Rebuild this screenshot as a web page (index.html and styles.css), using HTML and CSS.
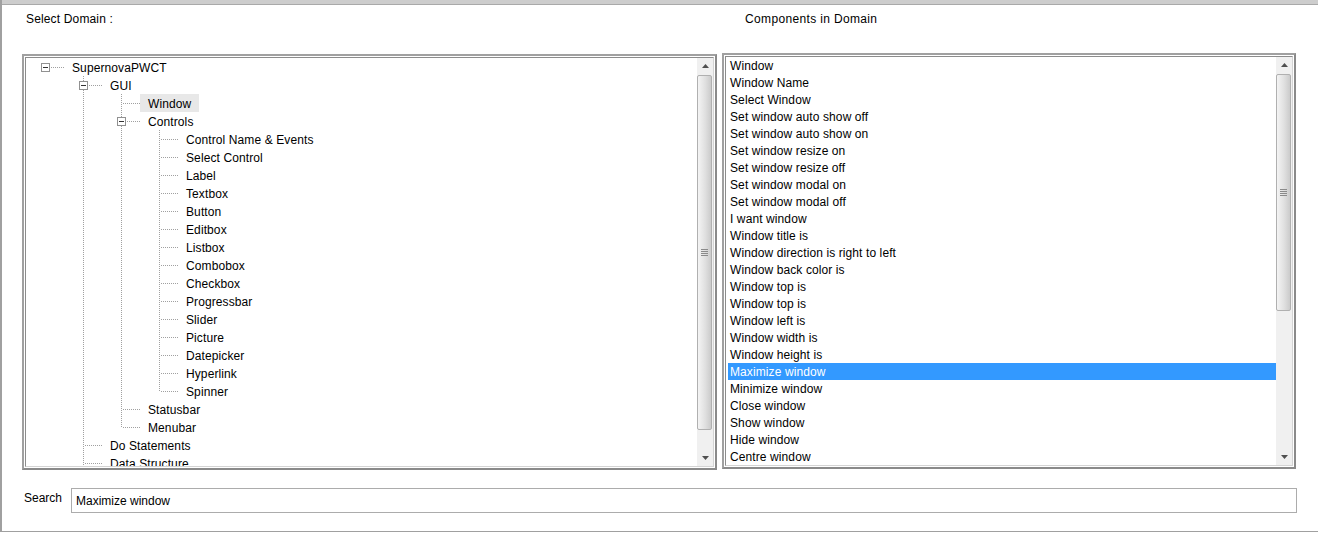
FILE: index.html
```html
<!DOCTYPE html>
<html>
<head>
<meta charset="utf-8">
<title>Select Domain</title>
<link rel="stylesheet" href="styles.css">
</head>
<body>
<div class="app">
  <div class="topbar"></div>
  <div class="header">
    <div class="h-left">Select Domain :</div>
    <div class="h-right">Components in Domain</div>
  </div>
  <div class="panels">
    <div class="panel tree-panel">
      <div class="inner">
        <div class="tree">
          <div class="trow"><span class="cell hz"><span class="box"></span></span><span class="lbl">SupernovaPWCT</span></div>
          <div class="trow"><span class="cell"></span><span class="cell tee"><span class="box"></span></span><span class="lbl">GUI</span></div>
          <div class="trow"><span class="cell"></span><span class="cell pipe"></span><span class="cell tee"></span><span class="lbl sel">Window</span></div>
          <div class="trow"><span class="cell"></span><span class="cell pipe"></span><span class="cell tee"><span class="box"></span></span><span class="lbl">Controls</span></div>
          <div class="trow"><span class="cell"></span><span class="cell pipe"></span><span class="cell pipe"></span><span class="cell tee"></span><span class="lbl">Control Name &amp; Events</span></div>
          <div class="trow"><span class="cell"></span><span class="cell pipe"></span><span class="cell pipe"></span><span class="cell tee"></span><span class="lbl">Select Control</span></div>
          <div class="trow"><span class="cell"></span><span class="cell pipe"></span><span class="cell pipe"></span><span class="cell tee"></span><span class="lbl">Label</span></div>
          <div class="trow"><span class="cell"></span><span class="cell pipe"></span><span class="cell pipe"></span><span class="cell tee"></span><span class="lbl">Textbox</span></div>
          <div class="trow"><span class="cell"></span><span class="cell pipe"></span><span class="cell pipe"></span><span class="cell tee"></span><span class="lbl">Button</span></div>
          <div class="trow"><span class="cell"></span><span class="cell pipe"></span><span class="cell pipe"></span><span class="cell tee"></span><span class="lbl">Editbox</span></div>
          <div class="trow"><span class="cell"></span><span class="cell pipe"></span><span class="cell pipe"></span><span class="cell tee"></span><span class="lbl">Listbox</span></div>
          <div class="trow"><span class="cell"></span><span class="cell pipe"></span><span class="cell pipe"></span><span class="cell tee"></span><span class="lbl">Combobox</span></div>
          <div class="trow"><span class="cell"></span><span class="cell pipe"></span><span class="cell pipe"></span><span class="cell tee"></span><span class="lbl">Checkbox</span></div>
          <div class="trow"><span class="cell"></span><span class="cell pipe"></span><span class="cell pipe"></span><span class="cell tee"></span><span class="lbl">Progressbar</span></div>
          <div class="trow"><span class="cell"></span><span class="cell pipe"></span><span class="cell pipe"></span><span class="cell tee"></span><span class="lbl">Slider</span></div>
          <div class="trow"><span class="cell"></span><span class="cell pipe"></span><span class="cell pipe"></span><span class="cell tee"></span><span class="lbl">Picture</span></div>
          <div class="trow"><span class="cell"></span><span class="cell pipe"></span><span class="cell pipe"></span><span class="cell tee"></span><span class="lbl">Datepicker</span></div>
          <div class="trow"><span class="cell"></span><span class="cell pipe"></span><span class="cell pipe"></span><span class="cell tee"></span><span class="lbl">Hyperlink</span></div>
          <div class="trow"><span class="cell"></span><span class="cell pipe"></span><span class="cell pipe"></span><span class="cell elbow"></span><span class="lbl">Spinner</span></div>
          <div class="trow"><span class="cell"></span><span class="cell pipe"></span><span class="cell tee"></span><span class="lbl">Statusbar</span></div>
          <div class="trow"><span class="cell"></span><span class="cell pipe"></span><span class="cell elbow"></span><span class="lbl">Menubar</span></div>
          <div class="trow"><span class="cell"></span><span class="cell tee"></span><span class="lbl">Do Statements</span></div>
          <div class="trow"><span class="cell"></span><span class="cell tee"></span><span class="lbl">Data Structure</span></div>
        </div>
        <div class="sb">
          <div class="sb-btn"><svg width="7" height="4" viewBox="0 0 7 4"><polygon points="0,4 7,4 3.5,0" fill="#505050"/></svg></div>
          <div class="sb-track"><div class="sb-thumb thumb-tree"><span class="grip"></span></div></div>
          <div class="sb-btn"><svg width="7" height="4" viewBox="0 0 7 4"><polygon points="0,0 7,0 3.5,4" fill="#505050"/></svg></div>
        </div>
      </div>
    </div>
    <div class="panel list-panel">
      <div class="inner">
        <ul class="list">
          <li>Window</li>
          <li>Window Name</li>
          <li>Select Window</li>
          <li>Set window auto show off</li>
          <li>Set window auto show on</li>
          <li>Set window resize on</li>
          <li>Set window resize off</li>
          <li>Set window modal on</li>
          <li>Set window modal off</li>
          <li>I want window</li>
          <li>Window title is</li>
          <li>Window direction is right to left</li>
          <li>Window back color is</li>
          <li>Window top is</li>
          <li>Window top is</li>
          <li>Window left is</li>
          <li>Window width is</li>
          <li>Window height is</li>
          <li class="sel">Maximize window</li>
          <li>Minimize window</li>
          <li>Close window</li>
          <li>Show window</li>
          <li>Hide window</li>
          <li>Centre window</li>
        </ul>
        <div class="sb">
          <div class="sb-btn"><svg width="7" height="4" viewBox="0 0 7 4"><polygon points="0,4 7,4 3.5,0" fill="#505050"/></svg></div>
          <div class="sb-track"><div class="sb-thumb thumb-list"><span class="grip"></span></div></div>
          <div class="sb-btn"><svg width="7" height="4" viewBox="0 0 7 4"><polygon points="0,0 7,0 3.5,4" fill="#505050"/></svg></div>
        </div>
      </div>
    </div>
  </div>
  <div class="search">
    <label class="search-label" for="q">Search</label>
    <input id="q" class="search-input" type="text" value="Maximize window">
  </div>
</div>
</body>
</html>
```

FILE: styles.css
```css
html, body {
  margin: 0;
  padding: 0;
  background: #ffffff;
}

body {
  width: 1318px;
  height: 535px;
  overflow: hidden;
  font-family: "Liberation Sans", Arial, sans-serif;
  font-size: 12px;
  color: #000;
}

.app {
  width: 1318px;
  height: 532px;
  box-sizing: border-box;
  border-left: 2px solid #a0a0a0;
  border-bottom: 1px solid #a0a0a0;
  background: #fff;
}

.topbar {
  height: 4px;
  background: #cdcdcd;
  border-bottom: 1px solid #a9a9a9;
}

.header {
  display: flex;
  gap: 5px;
  padding: 7px 0 0 20px;
  height: 14px;
  line-height: 14px;
  letter-spacing: 0.25px;
}

.h-left {
  width: 695px;
  padding-left: 4px;
  box-sizing: border-box;
  letter-spacing: 0.15px;
}

.h-right {
  padding-left: 23px;
  letter-spacing: 0.35px;
}

.panels {
  display: flex;
  align-items: flex-start;
  gap: 5px;
  margin-top: 27px;
  padding-left: 20px;
}

.panel {
  height: 416px;
  box-sizing: border-box;
  border: 2px solid #a0a0a0;
  border-right-color: #8a8a8a;
  border-bottom-color: #8a8a8a;
  padding: 1px;
  background: #fff;
}

.tree-panel {
  width: 695px;
  margin-top: 1px;
}

.list-panel {
  width: 574px;
}

.inner {
  height: 100%;
  box-sizing: border-box;
  border: 1px solid #8c8c8c;
  border-right-color: #d4d4d4;
  border-bottom-color: #d4d4d4;
  display: flex;
  overflow: hidden;
}

/* ---------- tree ---------- */
.tree {
  flex: 1;
  overflow: hidden;
}

.trow {
  display: flex;
  height: 18px;
  white-space: nowrap;
}

.cell {
  flex: none;
  width: 38px;
  height: 18px;
  display: flex;
  align-items: center;
  background-repeat: no-repeat;
}

.pipe {
  background-image: repeating-linear-gradient(to bottom, #a0a0a0 0 1px, transparent 1px 2px);
  background-size: 1px 18px;
  background-position: 19px 0;
}

.tee {
  background-image:
    repeating-linear-gradient(to bottom, #a0a0a0 0 1px, transparent 1px 2px),
    repeating-linear-gradient(to right, #a0a0a0 0 1px, transparent 1px 2px);
  background-size: 1px 18px, 18px 1px;
  background-position: 19px 0, 21px 9px;
}

.elbow {
  background-image:
    repeating-linear-gradient(to bottom, #a0a0a0 0 1px, transparent 1px 2px),
    repeating-linear-gradient(to right, #a0a0a0 0 1px, transparent 1px 2px);
  background-size: 1px 10px, 18px 1px;
  background-position: 19px 0, 21px 9px;
}

.hz {
  background-image: repeating-linear-gradient(to right, #a0a0a0 0 1px, transparent 1px 2px);
  background-size: 18px 1px;
  background-position: 21px 9px;
}

.box {
  width: 9px;
  height: 9px;
  margin-left: 15px;
  margin-top: 1px;
  box-sizing: border-box;
  border: 1px solid #919191;
  background: #fff linear-gradient(#333, #333) center / 5px 1px no-repeat;
}

.lbl {
  padding: 0 8px;
  line-height: 20px;
  height: 18px;
  letter-spacing: 0.1px;
}

.lbl.sel {
  background: #e8e8e8;
}

/* ---------- list ---------- */
.list {
  flex: 1;
  list-style: none;
  margin: 0;
  padding: 0 0 0 2px;
  overflow: hidden;
}

.list li {
  height: 17px;
  line-height: 19px;
  padding-left: 2px;
  white-space: nowrap;
  letter-spacing: 0.1px;
}

.list li.sel {
  background: #3399ff;
  color: #fff;
}

/* ---------- scrollbar ---------- */
.sb {
  flex: none;
  width: 16px;
  display: flex;
  flex-direction: column;
  background: #f0f0f0;
}

.sb-btn {
  height: 16px;
  flex: none;
  display: flex;
  align-items: center;
  justify-content: center;
}

.sb-track {
  flex: 1;
}

.sb-thumb {
  margin: 1px 0 0 0;
  width: 15px;
  box-sizing: border-box;
  border: 1px solid #b0b0b0;
  border-radius: 2px;
  background: linear-gradient(to right, #f4f4f4, #e0e0e0 55%, #cbcbcb);
  display: flex;
  align-items: center;
  justify-content: center;
}

.thumb-tree {
  height: 355px;
}

.thumb-list {
  height: 237px;
}

.grip {
  width: 7px;
  height: 7px;
  background: repeating-linear-gradient(to bottom, #8a8a8a 0 1px, transparent 1px 2px);
}

/* ---------- search ---------- */
.search {
  display: flex;
  align-items: flex-start;
  margin-top: 18px;
  padding-left: 22px;
}

.search-label {
  width: 47px;
  line-height: 14px;
  margin-top: 3px;
}

.search-input {
  width: 1226px;
  height: 25px;
  box-sizing: border-box;
  margin: 0;
  border: 1px solid #acacac;
  padding: 1px 0 0 4px;
  font-family: "Liberation Sans", Arial, sans-serif;
  font-size: 12px;
  color: #000;
  background: #fff;
  outline: none;
}
```
